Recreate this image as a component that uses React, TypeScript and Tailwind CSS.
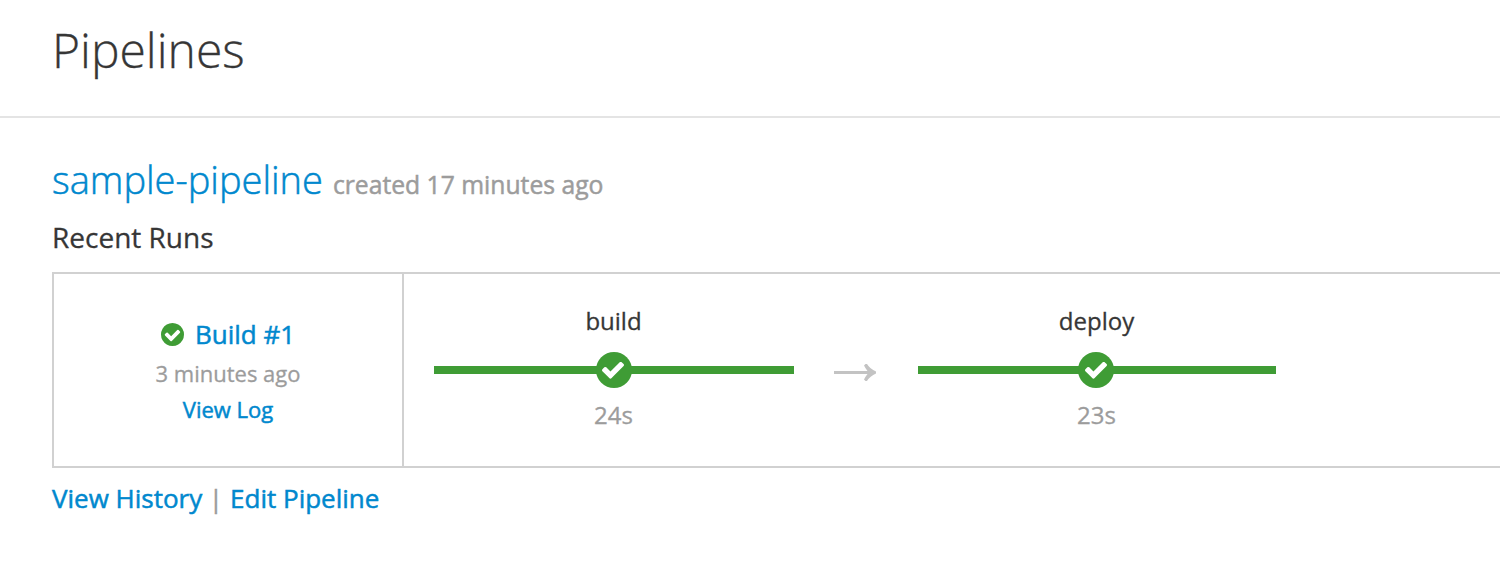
import React from 'react';

const CheckCircle = () => (
  <svg viewBox="128 128 1536 1536" className="mt-[2px] h-[23px] w-[23px] fill-[#3f9c35]">
    <path d="M1412 734q0-28-18-46l-91-90q-19-19-45-19t-45 19l-408 407-226-226q-19-19-45-19t-45 19l-91 90q-18 18-18 46 0 27 18 45l362 362q19 19 45 19 27 0 46-19l543-543q18-18 18-45zm252 162q0 209-103 385.5t-279.5 279.5-385.5 103-385.5-103-279.5-279.5-103-385.5 103-385.5 279.5-279.5 385.5-103 385.5 103 279.5 279.5 103 385.5z" />
  </svg>
);

const Check = ({ offset }: { offset: string }) => (
  <svg viewBox="121 373 1550 1149" className={`h-[17px] w-[22px] fill-white ${offset}`}>
    <path d="M1671 566q0 40-28 68l-724 724-136 136q-28 28-68 28t-68-28l-136-136-362-362q-28-28-28-68t28-68l136-136q28-28 68-28t68 28l294 295 656-657q28-28 68-28t68 28l136 136q28 28 28 68z" />
  </svg>
);

type StageProps = { name: string; duration: string; width: string; left: string; checkOffset: string };

const Stage = ({ name, duration, width, left, checkOffset }: StageProps) => (
  <div className={`flex shrink-0 flex-col items-center pt-[29px] ${width}`}>
    <div className="mr-[1px] h-[36px] text-[24px] leading-[36px] text-[#363636]">{name}</div>
    <div className="mt-[13px] flex h-[36px] w-full items-center">
      <div className={`h-[8px] shrink-0 bg-[#3f9c35] ${left}`} />
      <div className="-mx-px flex h-[36px] w-[36px] shrink-0 items-center justify-center rounded-full bg-[#3f9c35]">
        <Check offset={checkOffset} />
      </div>
      <div className="h-[8px] flex-1 bg-[#3f9c35]" />
    </div>
    <div className="mr-[1px] mt-[9px] h-[36px] text-[24px] leading-[36px] text-[#9c9c9c]">{duration}</div>
  </div>
);

export default function App() {
  return (
    <div className="h-[572px] w-full overflow-hidden whitespace-nowrap bg-white font-['Open_Sans',sans-serif] text-[#363636] [-webkit-text-stroke:0.3px]">
      <header className="h-[118px] border-b-2 border-[#e4e4e4] pl-[52px] pt-[20px]">
        <h1 className="text-[48px] font-light leading-[60px]">Pipelines</h1>
      </header>
      <main className="pl-[52px] pt-[36px]">
        <div className="flex h-[52px] items-baseline">
          <a className="text-[38px] font-light leading-[50px] text-[#0088ce] [-webkit-text-stroke:0.5px]">sample-pipeline</a>
          <span className="ml-[10px] text-[24.7px] text-[#9c9c9c] [-webkit-text-stroke:0.5px]">created 17 minutes ago</span>
        </div>
        <h2 className="mt-[11px] h-[40px] text-[28px] leading-[40px]">Recent Runs</h2>
        <section className="mt-[15px] flex h-[196px] border-y-2 border-l-2 border-[#d1d1d1]">
          <div className="flex w-[350px] shrink-0 flex-col items-center border-r-2 border-[#d1d1d1] pt-[40px]">
            <div className="flex h-[39px] items-center gap-[11px] text-[26px] leading-[40px] text-[#0088ce] [-webkit-text-stroke:0.5px]">
              <CheckCircle />
              <a>Build #1</a>
            </div>
            <div className="h-[36px] text-[22px] leading-[40px] text-[#9c9c9c]">3 minutes ago</div>
            <a className="text-[22px] leading-[40px] text-[#0088ce] [-webkit-text-stroke:0.5px]">View Log</a>
          </div>
          <div className="flex pl-[30px]">
            <Stage name="build" duration="24s" width="w-[360px]" left="w-[163px]" checkOffset="mr-[2px]" />
            <div className="flex w-[124px] shrink-0 pl-[40px] pt-[90px]">
              <svg viewBox="0 0 42 18" className="h-[18px] w-[42px] fill-[#c3c3c3]">
                <path d="M0 7H33.5Q31.5 4.5 30 1.5L31.5 0H33Q36 5 42 7.5V9.5Q36 12 33 17H31.5L30 15.5Q31.5 12.5 33.5 10H0Z" />
              </svg>
            </div>
            <Stage name="deploy" duration="23s" width="w-[358px]" left="w-[161px]" checkOffset="mr-0" />
          </div>
        </section>
        <div className="mt-[10px] flex h-[40px] text-[26px] leading-[40px] [-webkit-text-stroke:0.5px]">
          <a className="text-[#0088ce]">View History</a>
          <span className="ml-[6.5px] mr-[7px] text-[#9c9c9c]">|</span>
          <a className="text-[#0088ce]">Edit Pipeline</a>
        </div>
      </main>
    </div>
  );
}
